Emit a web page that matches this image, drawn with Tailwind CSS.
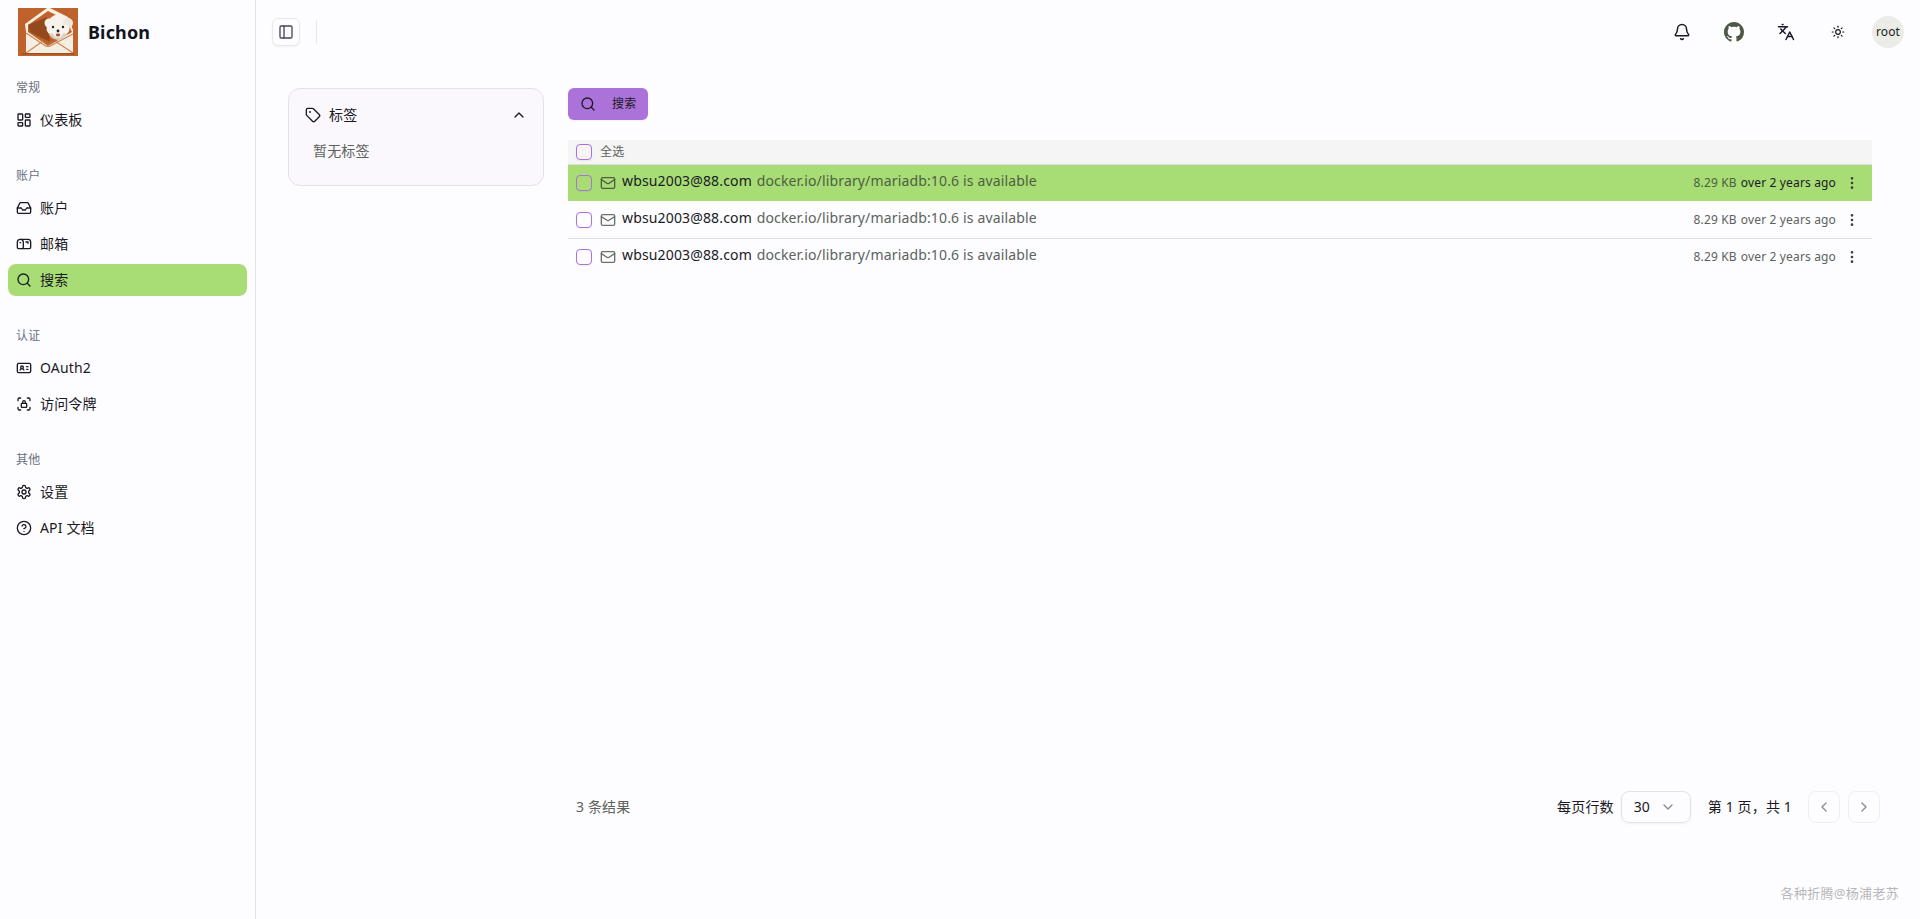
<!DOCTYPE html>
<html lang="zh-CN">
<head>
    <meta charset="UTF-8">
    <meta name="viewport" content="width=device-width, initial-scale=1.0">
    <title>Bichon</title>
    <script src="https://cdn.jsdelivr.net/npm/@tailwindcss/browser@4"></script>
</head>
<body class="bg-[#fdfcff] text-[#1a1a24] font-['Noto_Sans','Noto_Sans_CJK_SC',sans-serif] text-sm tracking-[0.15px] h-[919px] overflow-hidden">
<div class="flex h-[919px] relative">
    <!-- sidebar -->
    <aside class="w-[256px] shrink-0 border-r border-[#e3e2e7] flex flex-col">
        <div class="h-16 px-[18px] flex items-center gap-[10px] shrink-0">
            <svg class="w-[60px] h-12" viewBox="0 0 60 48">
                <rect width="60" height="48" fill="#c0622b"/>
                <path d="M7 16 29 0h3L50 9 55 22V45H8V24Z" fill="#f4efe3"/>
                <path d="M10 17 30 3 48 12 54 24 30 38 10 24Z" fill="#c0622b"/>
                <path d="M10 17 29 9 32 34 12 24Z" fill="#93491c"/>
                <path d="M8 24 30 40 55 26V45H8Z" fill="#f4efe3"/>
                <path d="M8 45 25 33M55 45 37 33M8 25 26 37Q30 40 34 37L55 26" fill="none" stroke="#cf8453" stroke-width="1.1"/>
                <rect x="4" y="45" width="52" height="1.3" fill="#9b4e20"/>
                <ellipse cx="40" cy="22" rx="10" ry="10" fill="#dcd0bc"/>
                <circle cx="40" cy="16" r="9.5" fill="#f7f3ec"/>
                <circle cx="31" cy="15" r="4.5" fill="#f7f3ec"/>
                <circle cx="50" cy="15" r="5" fill="#efe8dc"/>
                <circle cx="33" cy="21" r="4.5" fill="#f7f3ec"/>
                <circle cx="47" cy="21" r="4.5" fill="#f7f3ec"/>
                <circle cx="40" cy="24" r="5.5" fill="#f7f3ec"/>
                <circle cx="35" cy="19" r="1.2" fill="#222"/>
                <circle cx="45" cy="19" r="1.2" fill="#222"/>
                <circle cx="40" cy="23" r="1.4" fill="#222"/>
                <ellipse cx="40" cy="27" rx="2.2" ry="1.4" fill="#a8503c"/>
            </svg>
            <span class="text-lg font-bold text-[#14141f]">Bichon</span>
        </div>
        <nav class="flex flex-col gap-2">
            <div class="p-2">
                <div class="h-8 px-2 flex items-center text-xs text-[#6b7280]">常规</div>
                <a class="h-8 px-2 flex items-center gap-2">
                    <svg class="w-4 h-4" viewBox="0 0 24 24" fill="none" stroke="currentColor" stroke-width="2"><rect width="7" height="9" x="3" y="3" rx="1"/><rect width="7" height="5" x="14" y="3" rx="1"/><rect width="7" height="9" x="14" y="12" rx="1"/><rect width="7" height="5" x="3" y="16" rx="1"/></svg>
                    <span>仪表板</span>
                </a>
            </div>
            <div class="p-2">
                <div class="h-8 px-2 flex items-center text-xs text-[#6b7280]">账户</div>
                <div class="flex flex-col gap-1">
                    <a class="h-8 px-2 flex items-center gap-2">
                        <svg class="w-4 h-4" viewBox="0 0 24 24" fill="none" stroke="currentColor" stroke-width="2" stroke-linecap="round" stroke-linejoin="round"><path d="M22 12h-6l-2 3h-4l-2-3H2"/><path d="M5.45 5.11 2 12v6a2 2 0 0 0 2 2h16a2 2 0 0 0 2-2v-6l-3.45-6.89A2 2 0 0 0 16.76 4H7.24a2 2 0 0 0-1.79 1.11z"/></svg>
                        <span>账户</span>
                    </a>
                    <a class="h-8 px-2 flex items-center gap-2">
                        <svg class="w-4 h-4" viewBox="0 0 24 24" fill="none" stroke="currentColor" stroke-width="2" stroke-linecap="round" stroke-linejoin="round"><path d="M22 17a2 2 0 0 1-2 2H4a2 2 0 0 1-2-2V9.5C2 7 4 5 6.5 5H18c2.2 0 4 1.8 4 4v8Z"/><polyline points="15,9 18,9 18,11"/><path d="M6.5 5C9 5 11 7 11 9.5V17a2 2 0 0 1-2 2"/><line x1="6" x2="7" y1="10" y2="10"/></svg>
                        <span>邮箱</span>
                    </a>
                    <a class="h-8 px-2 flex items-center gap-2 rounded-lg bg-[#a8dd75]">
                        <svg class="w-4 h-4" viewBox="0 0 24 24" fill="none" stroke="currentColor" stroke-width="2" stroke-linecap="round" stroke-linejoin="round"><circle cx="11" cy="11" r="8"/><path d="m21 21-4.3-4.3"/></svg>
                        <span>搜索</span>
                    </a>
                </div>
            </div>
            <div class="p-2">
                <div class="h-8 px-2 flex items-center text-xs text-[#6b7280]">认证</div>
                <div class="flex flex-col gap-1">
                    <a class="h-8 px-2 flex items-center gap-2">
                        <svg class="w-4 h-4" viewBox="0 0 24 24" fill="none" stroke="currentColor" stroke-width="2" stroke-linecap="round" stroke-linejoin="round"><path d="M16 10h2"/><path d="M16 14h2"/><path d="M6.17 15a3 3 0 0 1 5.66 0"/><circle cx="9" cy="11" r="2"/><rect x="2" y="5" width="20" height="14" rx="2"/></svg>
                        <span>OAuth2</span>
                    </a>
                    <a class="h-8 px-2 flex items-center gap-2">
                        <svg class="w-4 h-4" viewBox="0 0 24 24" fill="none" stroke="currentColor" stroke-width="2" stroke-linecap="round" stroke-linejoin="round"><path d="M3 7V5a2 2 0 0 1 2-2h2"/><path d="M17 3h2a2 2 0 0 1 2 2v2"/><path d="M21 17v2a2 2 0 0 1-2 2h-2"/><path d="M7 21H5a2 2 0 0 1-2-2v-2"/><rect x="8" y="11" width="8" height="6" rx="1"/><path d="M10 11V9a2 2 0 0 1 4 0v2"/></svg>
                        <span>访问令牌</span>
                    </a>
                </div>
            </div>
            <div class="p-2">
                <div class="h-8 px-2 flex items-center text-xs text-[#6b7280]">其他</div>
                <div class="flex flex-col gap-1">
                    <a class="h-8 px-2 flex items-center gap-2">
                        <svg class="w-4 h-4" viewBox="0 0 24 24" fill="none" stroke="currentColor" stroke-width="2" stroke-linecap="round" stroke-linejoin="round"><path d="M12.22 2h-.44a2 2 0 0 0-2 2v.18a2 2 0 0 1-1 1.73l-.43.25a2 2 0 0 1-2 0l-.15-.08a2 2 0 0 0-2.73.73l-.22.38a2 2 0 0 0 .73 2.73l.15.1a2 2 0 0 1 1 1.72v.51a2 2 0 0 1-1 1.74l-.15.09a2 2 0 0 0-.73 2.73l.22.38a2 2 0 0 0 2.73.73l.15-.08a2 2 0 0 1 2 0l.43.25a2 2 0 0 1 1 1.73V20a2 2 0 0 0 2 2h.44a2 2 0 0 0 2-2v-.18a2 2 0 0 1 1-1.73l.43-.25a2 2 0 0 1 2 0l.15.08a2 2 0 0 0 2.73-.73l.22-.39a2 2 0 0 0-.73-2.73l-.15-.08a2 2 0 0 1-1-1.74v-.5a2 2 0 0 1 1-1.74l.15-.09a2 2 0 0 0 .73-2.73l-.22-.38a2 2 0 0 0-2.73-.73l-.15.08a2 2 0 0 1-2 0l-.43-.25a2 2 0 0 1-1-1.73V4a2 2 0 0 0-2-2z"/><circle cx="12" cy="12" r="3"/></svg>
                        <span>设置</span>
                    </a>
                    <a class="h-8 px-2 flex items-center gap-2">
                        <svg class="w-4 h-4" viewBox="0 0 24 24" fill="none" stroke="currentColor" stroke-width="2" stroke-linecap="round" stroke-linejoin="round"><circle cx="12" cy="12" r="10"/><path d="M9.09 9a3 3 0 0 1 5.83 1c0 2-3 3-3 3"/><path d="M12 17h.01"/></svg>
                        <span>API 文档</span>
                    </a>
                </div>
            </div>
        </nav>
    </aside>

    <!-- main -->
    <main class="flex-1 min-w-0 flex flex-col">
        <header class="h-16 shrink-0 pl-4 pr-4 flex items-center">
            <button class="w-7 h-7 rounded-md border border-[#e8e7ec] shadow-xs flex items-center justify-center">
                <svg class="w-4 h-4 text-[#4a4656]" viewBox="0 0 24 24" fill="none" stroke="currentColor" stroke-width="2" stroke-linecap="round" stroke-linejoin="round"><rect width="18" height="18" x="3" y="3" rx="2"/><path d="M9 3v18"/></svg>
            </button>
            <div class="w-px h-6 bg-[#e8e7ec] ml-4"></div>
            <div class="ml-auto flex items-center gap-4">
                <button class="w-9 h-9 flex items-center justify-center">
                    <svg class="w-[18px] h-[18px]" viewBox="0 0 24 24" fill="none" stroke="currentColor" stroke-width="2" stroke-linecap="round" stroke-linejoin="round"><path d="M10.268 21a2 2 0 0 0 3.464 0"/><path d="M3.262 15.326A1 1 0 0 0 4 17h16a1 1 0 0 0 .74-1.673C19.41 13.956 18 12.499 18 8A6 6 0 0 0 6 8c0 4.499-1.411 5.956-2.738 7.326"/></svg>
                </button>
                <button class="w-9 h-9 flex items-center justify-center">
                    <svg class="w-5 h-5 text-[#4c5844]" viewBox="0 0 16 16" fill="currentColor"><path d="M8 0C3.58 0 0 3.58 0 8c0 3.54 2.29 6.53 5.47 7.59.4.07.55-.17.55-.38 0-.19-.01-.82-.01-1.49-2.01.37-2.53-.49-2.69-.94-.09-.23-.48-.94-.82-1.13-.28-.15-.68-.52-.01-.53.63-.01 1.08.58 1.23.82.72 1.21 1.87.87 2.33.66.07-.52.28-.87.51-1.07-1.78-.2-3.64-.89-3.64-3.95 0-.87.31-1.59.82-2.15-.08-.2-.36-1.02.08-2.12 0 0 .67-.21 2.2.82.64-.18 1.32-.27 2-.27.68 0 1.36.09 2 .27 1.53-1.04 2.2-.82 2.2-.82.44 1.1.16 1.92.08 2.12.51.56.82 1.27.82 2.15 0 3.07-1.87 3.75-3.65 3.95.29.25.54.73.54 1.48 0 1.07-.01 1.93-.01 2.2 0 .21.15.46.55.38A8.013 8.013 0 0016 8c0-4.42-3.58-8-8-8z"/></svg>
                </button>
                <button class="w-9 h-9 flex items-center justify-center">
                    <svg class="w-[18px] h-[18px]" viewBox="0 0 24 24" fill="none" stroke="currentColor" stroke-width="2" stroke-linecap="round" stroke-linejoin="round"><path d="m5 8 6 6"/><path d="m4 14 6-6 2-3"/><path d="M2 5h12"/><path d="M7 2h1"/><path d="m22 22-5-10-5 10"/><path d="M14 18h6"/></svg>
                </button>
                <button class="w-9 h-9 flex items-center justify-center">
                    <svg class="w-3.5 h-3.5" viewBox="0 0 24 24" fill="none" stroke="currentColor" stroke-width="2" stroke-linecap="round" stroke-linejoin="round"><circle cx="12" cy="12" r="4"/><path d="M12 2v2"/><path d="M12 20v2"/><path d="m4.93 4.93 1.41 1.41"/><path d="m17.66 17.66 1.41 1.41"/><path d="M2 12h2"/><path d="M20 12h2"/><path d="m6.34 17.66-1.41 1.41"/><path d="m19.07 4.93-1.41 1.41"/></svg>
                </button>
                <div class="w-8 h-8 rounded-full bg-[#ebece6] flex items-center justify-center text-xs">root</div>
            </div>
        </header>

        <div class="flex gap-6 pt-6 pl-8 pr-12">
            <!-- tag panel -->
            <section class="w-[256px] h-[98px] shrink-0 rounded-xl border border-[#e4e2e8] bg-[#faf8fd] px-4 pt-[15px]">
                <div class="flex items-center justify-between h-[22px]">
                    <div class="flex items-center gap-2">
                        <svg class="w-4 h-4" viewBox="0 0 24 24" fill="none" stroke="currentColor" stroke-width="2" stroke-linecap="round" stroke-linejoin="round"><path d="M12.586 2.586A2 2 0 0 0 11.172 2H4a2 2 0 0 0-2 2v7.172a2 2 0 0 0 .586 1.414l8.704 8.704a2.426 2.426 0 0 0 3.42 0l6.58-6.58a2.426 2.426 0 0 0 0-3.42z"/><circle cx="7.5" cy="7.5" r=".5" fill="currentColor"/></svg>
                        <span>标签</span>
                    </div>
                    <svg class="w-4 h-4" viewBox="0 0 24 24" fill="none" stroke="currentColor" stroke-width="2" stroke-linecap="round" stroke-linejoin="round"><path d="m18 15-6-6-6 6"/></svg>
                </div>
                <p class="mt-[15px] pl-2 text-[#5b635b]">暂无标签</p>
            </section>

            <!-- results -->
            <section class="flex-1 min-w-0 h-[735px] flex flex-col">
                <button class="w-20 h-8 rounded-md bg-[#ab72d9] shadow-xs flex items-center gap-4 pl-3 text-xs">
                    <svg class="w-4 h-4" viewBox="0 0 24 24" fill="none" stroke="currentColor" stroke-width="2" stroke-linecap="round" stroke-linejoin="round"><circle cx="11" cy="11" r="8"/><path d="m21 21-4.3-4.3"/></svg>
                    <span>搜索</span>
                </button>
                <div class="mt-5 h-6 bg-[#f5f5f5] border-b border-[#dcdcdc] box-content flex items-center gap-2 px-2 text-xs text-[#5b635b]">
                    <span class="w-4 h-4 rounded border border-[#ab72d9] shadow-xs"></span>
                    <span>全选</span>
                </div>
                <div class="h-9 bg-[#a8dd75] flex items-center gap-2 pl-2 pr-3">
                    <span class="w-4 h-4 rounded border border-[#ab72d9] shadow-xs"></span>
                    <svg class="w-4 h-4 -mr-0.5 text-[#4f5d43]" viewBox="0 0 24 24" fill="none" stroke="currentColor" stroke-width="2" stroke-linecap="round" stroke-linejoin="round"><rect x="2" y="4" width="20" height="16" rx="2"/><path d="m22 7-8.97 5.7a1.94 1.94 0 0 1-2.06 0L2 7"/></svg>
                    <div class="flex-1 min-w-0 -mt-1 truncate"><span>wbsu2003@88.com</span> <span class="ml-px text-[#4f5d43]">docker.io/library/mariadb:10.6 is available</span></div>
                    <span class="text-xs text-[#4f5d43]">8.29 KB</span>
                    <span class="text-xs -ml-1">over 2 years ago</span>
                    <svg class="w-4 h-4 text-[#3a3f3a]" viewBox="0 0 24 24" fill="none" stroke="currentColor" stroke-width="2" stroke-linecap="round" stroke-linejoin="round"><circle cx="12" cy="12" r="1"/><circle cx="12" cy="5" r="1"/><circle cx="12" cy="19" r="1"/></svg>
                </div>
                <div class="h-[37px] mt-px border-b border-[#e0e0e3] flex items-center gap-2 pl-2 pr-3">
                    <span class="w-4 h-4 rounded border border-[#ab72d9] shadow-xs"></span>
                    <svg class="w-4 h-4 -mr-0.5 text-[#6b7265]" viewBox="0 0 24 24" fill="none" stroke="currentColor" stroke-width="2" stroke-linecap="round" stroke-linejoin="round"><rect x="2" y="4" width="20" height="16" rx="2"/><path d="m22 7-8.97 5.7a1.94 1.94 0 0 1-2.06 0L2 7"/></svg>
                    <div class="flex-1 min-w-0 -mt-1 truncate"><span>wbsu2003@88.com</span> <span class="ml-px text-[#5b635b]">docker.io/library/mariadb:10.6 is available</span></div>
                    <span class="text-xs text-[#5b635b]">8.29 KB</span>
                    <span class="text-xs -ml-1 text-[#5b635b]">over 2 years ago</span>
                    <svg class="w-4 h-4 text-[#3a3f3a]" viewBox="0 0 24 24" fill="none" stroke="currentColor" stroke-width="2" stroke-linecap="round" stroke-linejoin="round"><circle cx="12" cy="12" r="1"/><circle cx="12" cy="5" r="1"/><circle cx="12" cy="19" r="1"/></svg>
                </div>
                <div class="h-9 flex items-center gap-2 pl-2 pr-3">
                    <span class="w-4 h-4 rounded border border-[#ab72d9] shadow-xs"></span>
                    <svg class="w-4 h-4 -mr-0.5 text-[#6b7265]" viewBox="0 0 24 24" fill="none" stroke="currentColor" stroke-width="2" stroke-linecap="round" stroke-linejoin="round"><rect x="2" y="4" width="20" height="16" rx="2"/><path d="m22 7-8.97 5.7a1.94 1.94 0 0 1-2.06 0L2 7"/></svg>
                    <div class="flex-1 min-w-0 -mt-1 truncate"><span>wbsu2003@88.com</span> <span class="ml-px text-[#5b635b]">docker.io/library/mariadb:10.6 is available</span></div>
                    <span class="text-xs text-[#5b635b]">8.29 KB</span>
                    <span class="text-xs -ml-1 text-[#5b635b]">over 2 years ago</span>
                    <svg class="w-4 h-4 text-[#3a3f3a]" viewBox="0 0 24 24" fill="none" stroke="currentColor" stroke-width="2" stroke-linecap="round" stroke-linejoin="round"><circle cx="12" cy="12" r="1"/><circle cx="12" cy="5" r="1"/><circle cx="12" cy="19" r="1"/></svg>
                </div>

                <div class="mt-auto -mr-2 pl-2 h-8 flex items-center">
                    <span class="text-[#5b635b]">3 条结果</span>
                    <div class="ml-auto flex items-center">
                        <span>每页行数</span>
                        <div class="ml-[7px] w-[70px] h-8 rounded-lg border border-[#e4e2e8] shadow-xs flex items-center justify-between pl-3 pr-[14px]">
                            <span>30</span>
                            <svg class="w-4 h-4 text-[#8a8a92]" viewBox="0 0 24 24" fill="none" stroke="currentColor" stroke-width="2" stroke-linecap="round" stroke-linejoin="round"><path d="m6 9 6 6 6-6"/></svg>
                        </div>
                        <span class="ml-[17px]">第 1 页，共 1</span>
                        <button class="ml-[16px] w-8 h-8 rounded-lg border border-[#efeef2] flex items-center justify-center">
                            <svg class="w-4 h-4 text-[#8a8a92]" viewBox="0 0 24 24" fill="none" stroke="currentColor" stroke-width="2" stroke-linecap="round" stroke-linejoin="round"><path d="m15 18-6-6 6-6"/></svg>
                        </button>
                        <button class="ml-2 w-8 h-8 rounded-lg border border-[#efeef2] flex items-center justify-center">
                            <svg class="w-4 h-4 text-[#8a8a92]" viewBox="0 0 24 24" fill="none" stroke="currentColor" stroke-width="2" stroke-linecap="round" stroke-linejoin="round"><path d="m9 18 6-6-6-6"/></svg>
                        </button>
                    </div>
                </div>
            </section>
        </div>
    </main>

    <!-- watermark over the page -->
    <div class="absolute right-[21px] bottom-[16px] text-[13px] leading-5 tracking-[0.3px] text-[#b7b7b7]">各种折腾@杨浦老苏</div>
</div>
</body>
</html>
